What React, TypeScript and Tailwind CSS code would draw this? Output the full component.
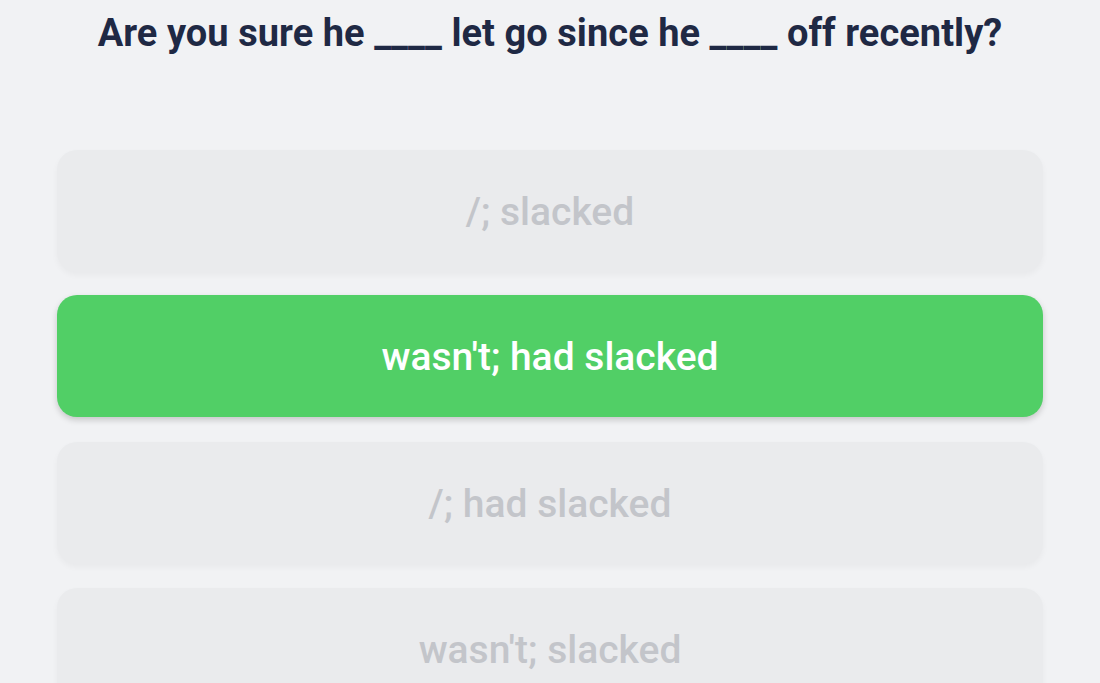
const options = [
  { label: "/; slacked", correct: false },
  { label: "wasn't; had slacked", correct: true },
  { label: "/; had slacked", correct: false },
  { label: "wasn't; slacked", correct: false },
];

export default function App() {
  return (
    <div
      className="min-h-screen bg-[#f1f2f4] px-[57px] pt-[9px] overflow-hidden"
      style={{ fontFamily: "Roboto, 'Noto Sans', sans-serif" }}
    >
      <h1 className="text-center text-[38px] font-bold leading-[48px] text-[#1f2944] tracking-[0.05px]">
        Are you sure he ____ let go since he ____ off recently?
      </h1>
      <div className="mt-[93px] flex flex-col gap-[24px]">
        {options.map((opt) =>
          opt.correct ? (
            <div
              key={opt.label}
              className="h-[122px] -translate-y-px rounded-[20px] bg-[#51cf66] flex items-center justify-center pt-[2px] text-[39px] font-medium text-white shadow-[0_3px_6px_rgba(0,0,0,0.18)]"
            >
              {opt.label}
            </div>
          ) : (
            <div
              key={opt.label}
              className="h-[122px] rounded-[20px] bg-[#eaebed] flex items-center justify-center pt-[2px] text-[39px] font-medium text-[#c3c5ca] shadow-[0_3px_6px_rgba(0,0,0,0.04)]"
            >
              {opt.label}
            </div>
          )
        )}
      </div>
    </div>
  );
}
